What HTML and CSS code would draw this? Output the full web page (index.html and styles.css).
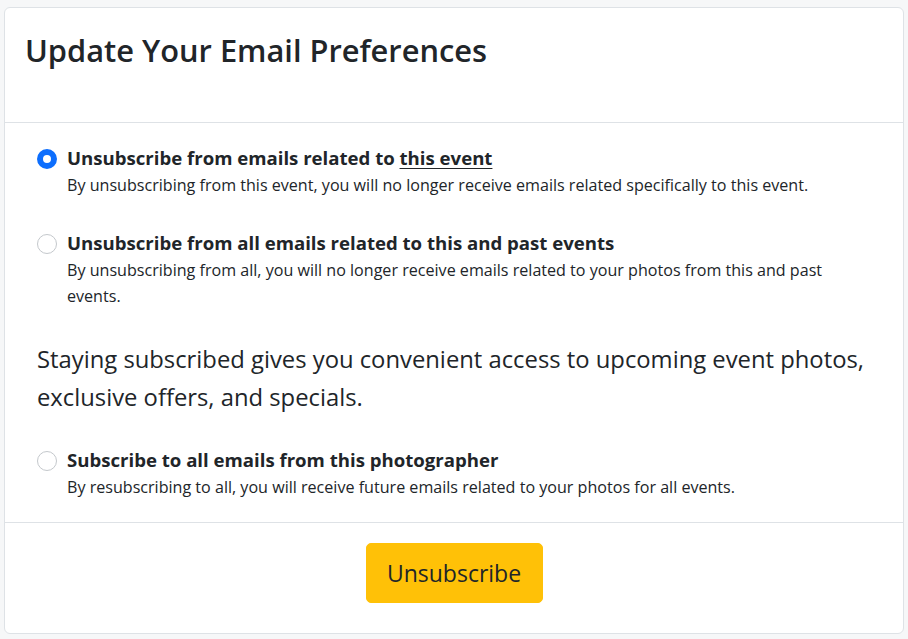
FILE: index.html
```html
<!DOCTYPE html>
<html lang="en">
<head>
<meta charset="utf-8">
<title>Update Your Email Preferences</title>
<link rel="stylesheet" href="styles.css">
</head>
<body>
<div class="card">
  <div class="card-header">
    <h2 class="title">Update Your Email Preferences</h2>
  </div>
  <div class="card-body">
    <label class="option">
      <input type="radio" name="pref" class="radio" checked>
      <span class="option-text">
        <span class="option-title">Unsubscribe from emails related to <u>this event</u></span>
        <span class="option-desc">By unsubscribing from this event, you will no longer receive emails related specifically to this event.</span>
      </span>
    </label>
    <label class="option">
      <input type="radio" name="pref" class="radio">
      <span class="option-text">
        <span class="option-title">Unsubscribe from all emails related to this and past events</span>
        <span class="option-desc">By unsubscribing from all, you will no longer receive emails related to your photos from this and past events.</span>
      </span>
    </label>
    <p class="note">Staying subscribed gives you convenient access to upcoming event photos, exclusive offers, and specials.</p>
    <label class="option option-last">
      <input type="radio" name="pref" class="radio">
      <span class="option-text">
        <span class="option-title">Subscribe to all emails from this photographer</span>
        <span class="option-desc">By resubscribing to all, you will receive future emails related to your photos for all events.</span>
      </span>
    </label>
  </div>
  <div class="card-footer">
    <button class="btn-warning" type="button">Unsubscribe</button>
  </div>
</div>
</body>
</html>
```
FILE: styles.css
```css
* { box-sizing: border-box; }
html, body { margin: 0; }
body {
  background: #f6f7f8;
  padding: 7px 4px 6px 4px;
  font-family: "Open Sans", "Noto Sans", sans-serif;
  color: #212529;
}
.card {
  background: #fff;
  border: 1px solid #dee2e6;
  border-radius: 6px;
  display: flex;
  flex-direction: column;
}
.card-header {
  padding: 20px 20px 0 20px;
  height: 115px;
  border-bottom: 1px solid #dee2e6;
}
.title {
  margin: 0;
  font-size: 30.8px;
  font-weight: 600;
  line-height: 44px;
  color: #212529;
}
.card-body {
  padding: 21px 32px 22px 32px;
  display: flex;
  flex-direction: column;
}
.option {
  display: flex;
  align-items: flex-start;
  gap: 10px;
  margin-bottom: 31px;
  cursor: pointer;
}
.option-last { margin-bottom: 0; }
.radio {
  appearance: none;
  -webkit-appearance: none;
  margin: 5px 0 0 0;
  width: 20px;
  height: 20px;
  flex: none;
  border: 1px solid #c4c8cc;
  border-radius: 50%;
  background: #fff;
}
.radio:checked {
  border: 6px solid #0d6efd;
  background: #fff;
}
.option-text {
  display: flex;
  flex-direction: column;
}
.option-title {
  font-weight: 700;
  font-size: 18.6px;
  line-height: 28px;
}
.option-title u { text-underline-offset: 3px; }
.option-desc {
  font-size: 16.1px;
  line-height: 26px;
  color: #212529;
}
.note {
  margin: 0 0 30px 0;
  font-size: 23.8px;
  line-height: 38px;
}
.card-footer {
  border-top: 1px solid #dee2e6;
  padding: 20px 0 30px 0;
  display: flex;
  justify-content: center;
}
.btn-warning {
  background: #ffc107;
  border: 1px solid #ffc107;
  border-radius: 5px;
  width: 177px;
  height: 60px;
  font-family: inherit;
  font-size: 23px;
  color: #212529;
  cursor: pointer;
}
```
